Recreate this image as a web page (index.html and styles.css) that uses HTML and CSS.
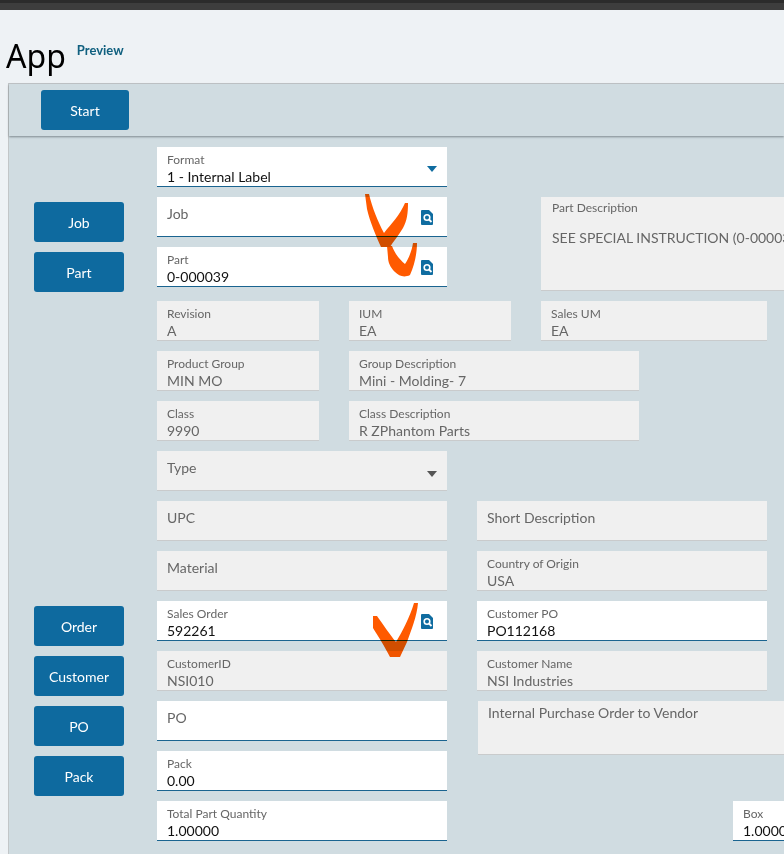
FILE: index.html
```html
<!DOCTYPE html>
<html lang="en">
<head>
<meta charset="utf-8">
<title>App</title>
<link rel="stylesheet" href="styles.css">
</head>
<body>
<div class="topbar"></div>
<header class="title-row">
  <h1 class="title">App</h1>
  <span class="preview">Preview</span>
</header>
<main class="panel">
  <div class="toolbar"><button class="btn btn-start">Start</button></div>
  <div class="form">
    <div class="row">
      <div class="slot"></div>
      <div class="field w290"><label>Format</label><div class="val">1 - Internal Label</div><i class="caret"></i></div>
    </div>
    <div class="row-split">
      <div class="stack">
        <div class="row">
          <div class="slot"><button class="btn">Job</button></div>
          <div class="field w290"><div class="ph">Job</div><svg class="search" viewBox="0 0 12 15"><path d="M1 0H8L12 4V14Q12 15 11 15H1Q0 15 0 14V1Q0 0 1 0Z" fill="#0f6ca0"/><circle cx="6" cy="7.5" r="2.8" fill="none" stroke="#fff" stroke-width="1.6"/><path d="M8 9.5L10.5 12" stroke="#fff" stroke-width="1.8"/></svg></div>
        </div>
        <div class="row">
          <div class="slot"><button class="btn">Part</button></div>
          <div class="field w290"><label>Part</label><div class="val">0-000039</div><svg class="search" viewBox="0 0 12 15"><path d="M1 0H8L12 4V14Q12 15 11 15H1Q0 15 0 14V1Q0 0 1 0Z" fill="#0f6ca0"/><circle cx="6" cy="7.5" r="2.8" fill="none" stroke="#fff" stroke-width="1.6"/><path d="M8 9.5L10.5 12" stroke="#fff" stroke-width="1.8"/></svg></div>
        </div>
      </div>
      <div class="field off desc"><label>Part Description</label><div class="desc-text">SEE SPECIAL INSTRUCTION (0-000039)</div></div>
    </div>
    <div class="row">
      <div class="slot"></div>
      <div class="field off w162"><label>Revision</label><div class="val">A</div></div>
      <div class="field off w162"><label>IUM</label><div class="val">EA</div></div>
      <div class="field off w226"><label>Sales UM</label><div class="val">EA</div></div>
    </div>
    <div class="row">
      <div class="slot"></div>
      <div class="field off w162"><label>Product Group</label><div class="val">MIN MO</div></div>
      <div class="field off w290"><label>Group Description</label><div class="val">Mini - Molding- 7</div></div>
    </div>
    <div class="row">
      <div class="slot"></div>
      <div class="field off w162"><label>Class</label><div class="val">9990</div></div>
      <div class="field off w290"><label>Class Description</label><div class="val">R ZPhantom Parts</div></div>
    </div>
    <div class="row">
      <div class="slot"></div>
      <div class="field off w290"><div class="ph">Type</div><i class="caret caret-off"></i></div>
    </div>
    <div class="row">
      <div class="slot"></div>
      <div class="field off w290"><div class="ph">UPC</div></div>
      <div class="field off w290"><div class="ph">Short Description</div></div>
    </div>
    <div class="row">
      <div class="slot"></div>
      <div class="field off w290"><div class="ph">Material</div></div>
      <div class="field off w290"><label>Country of Origin</label><div class="val">USA</div></div>
    </div>
    <div class="row">
      <div class="slot"><button class="btn">Order</button></div>
      <div class="field w290"><label>Sales Order</label><div class="val">592261</div><svg class="search search-low" viewBox="0 0 12 15"><path d="M1 0H8L12 4V14Q12 15 11 15H1Q0 15 0 14V1Q0 0 1 0Z" fill="#0f6ca0"/><circle cx="6" cy="7.5" r="2.8" fill="none" stroke="#fff" stroke-width="1.6"/><path d="M8 9.5L10.5 12" stroke="#fff" stroke-width="1.8"/></svg></div>
      <div class="field w290"><label>Customer PO</label><div class="val">PO112168</div></div>
    </div>
    <div class="row">
      <div class="slot"><button class="btn">Customer</button></div>
      <div class="field off w290"><label>CustomerID</label><div class="val">NSI010</div></div>
      <div class="field off w290"><label>Customer Name</label><div class="val">NSI Industries</div></div>
    </div>
    <div class="row">
      <div class="slot"><button class="btn">PO</button></div>
      <div class="field w290"><div class="ph">PO</div></div>
      <div class="field off note"><div class="note-text">Internal Purchase Order to Vendor</div></div>
    </div>
    <div class="row">
      <div class="slot"><button class="btn">Pack</button></div>
      <div class="field w290"><label>Pack</label><div class="val">0.00</div></div>
    </div>
    <div class="row row-last">
      <div class="slot"></div>
      <div class="field w290"><label>Total Part Quantity</label><div class="val">1.00000</div></div>
      <div class="field box"><label>Box</label><div class="val">1.00000</div></div>
    </div>
  </div>
</main>
<svg class="marks" viewBox="0 0 784 854" aria-hidden="true">
  <path d="M365 194L369 194C372 207 378 222 384 233C391 224 400 215 405 203L408 203C408 213 407 221 403 228C398 236 393 242 390 247L381 247C376 236 370 222 367 209Z"/>
  <path d="M387 246L392 246C395 254 400 260 405 264C409 258 412 250 413 243L417 243C417 252 415 264 410 275C404 278 399 276 395 272C390 267 388 262 388 257Z"/>
  <path d="M373 616L377 616C383 624 390 635 396 642C402 632 410 617 414 603L418 603C417 616 411 631 407 642L400 657H390C385 647 378 636 373 628Z"/>
</svg>
</body>
</html>
```
FILE: styles.css
```css
html, body { margin: 0; padding: 0; }
body {
  position: relative;
  width: 784px;
  height: 854px;
  overflow: hidden;
  background: #eef2f5;
  font-family: "Lato", "Liberation Sans", sans-serif;
}
.topbar {
  height: 7px;
  background: #3d3d3d;
  border-top: 3px solid #2b2b2b;
}
.title-row {
  height: 73px;
  display: flex;
  align-items: flex-start;
  padding-left: 6px;
}
.title {
  margin: 26px 0 0;
  font-family: "Noto Sans", sans-serif;
  font-size: 32px;
  font-weight: 400;
  line-height: 40px;
  color: #000;
}
.preview {
  margin: 30px 0 0 11px;
  font-size: 13px;
  font-weight: 700;
  line-height: 20px;
  color: #10607f;
}
.panel {
  margin-left: 8px;
  background: #d0dce1;
  border-top: 1px solid #c2c6c8;
  border-left: 1px solid #c2c6c8;
  height: 770px;
}
.toolbar {
  height: 52px;
  box-sizing: border-box;
  padding: 6px 0 0 32px;
  box-shadow: 0 1px 2px rgba(60, 70, 75, .55);
  margin-bottom: 11px;
}
.btn {
  display: block;
  width: 90px;
  height: 40px;
  margin: 5px 0 -5px;
  padding: 0;
  border: 0;
  border-radius: 3px;
  background: #0e6a9f;
  color: #fff;
  font: 400 14px "Lato", sans-serif;
}
.btn-start { width: 88px; margin: 0; }
.form { padding-left: 25px; }
.row {
  display: flex;
  gap: 30px;
  margin-bottom: 10px;
}
.row-split { display: flex; margin-bottom: 10px; }
.stack .row:last-child { margin-bottom: 4px; }
.slot { width: 93px; flex: none; }
.field {
  position: relative;
  box-sizing: border-box;
  height: 40px;
  flex: none;
  padding: 5px 10px 0;
  background: #fff;
  border-bottom: 1px solid #1a6490;
}
.off {
  background: #f0f0f0;
  border-bottom: 1px solid #c9cbcc;
}
.w290 { width: 290px; }
.w162 { width: 162px; }
.w226 { width: 226px; }
label {
  display: block;
  font-size: 12px;
  line-height: 16px;
  color: #666;
}
.val {
  font-size: 14px;
  line-height: 17px;
  color: #111;
}
.off .val { color: #666; }
.ph {
  padding-top: 3px;
  font-size: 14px;
  line-height: 17px;
  color: #666;
}
.caret {
  position: absolute;
  right: 10px;
  top: 19px;
  width: 0;
  height: 0;
  border: 5px solid transparent;
  border-bottom: 0;
  border-top: 6px solid #0f6ca0;
}
.caret-off { border-top-color: #555; top: 20px; }
.search {
  position: absolute;
  right: 14px;
  top: 13px;
  width: 12px;
  height: 15px;
}
.search-low { top: 13px; }
.desc {
  width: 300px;
  height: 94px;
  margin-left: 94px;
  padding: 3px 11px 0;
}
.desc-text {
  margin-top: 13px;
  font-size: 14px;
  line-height: 17px;
  color: #666;
}
.note {
  width: 320px;
  height: 54px;
  margin: 0 0 -14px 1px;
  padding: 3px 10px 0;
}
.note-text {
  font-size: 14px;
  line-height: 17px;
  color: #666;
}
.box {
  width: 100px;
  margin-left: 256px;
}
.row-last { margin-bottom: 0; }
.marks {
  position: absolute;
  left: 0;
  top: 0;
  width: 784px;
  height: 854px;
  pointer-events: none;
  mix-blend-mode: multiply;
}
.marks path { fill: #ff5a00; }
```
